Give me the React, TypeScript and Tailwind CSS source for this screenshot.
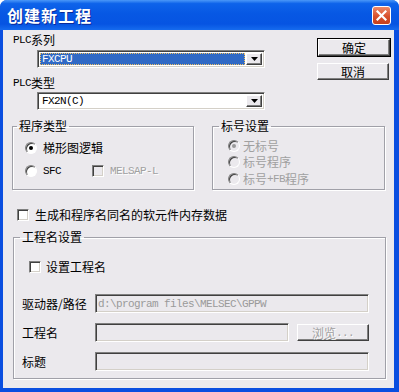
import React from "react";

const BG = "bg-[#ebe9ed]";
const sunken =
  "border border-t-[#808080] border-l-[#808080] border-b-white border-r-white shadow-[inset_1px_1px_0_#404040,inset_-1px_-1px_0_#d4d0c8]";
const raised =
  "border border-t-white border-l-white border-b-[#404040] border-r-[#404040] shadow-[inset_-1px_-1px_0_#808080]";

function A({ children, className = "" }: { children: React.ReactNode; className?: string }) {
  return (
    <span className={"font-['Liberation_Mono',monospace] text-[11px] tracking-[-0.6px] leading-[14px] " + className}>
      {children}
    </span>
  );
}

function Radio({ checked, disabled }: { checked?: boolean; disabled?: boolean }) {
  return (
    <span
      className={
        "flex w-[12px] h-[12px] shrink-0 rounded-full border border-t-[#808080] border-l-[#808080] border-b-white border-r-white shadow-[inset_1px_1px_0_#404040] items-center justify-center " +
        (disabled ? "bg-[#ebe9ed]" : "bg-white")
      }
    >
      {checked && <span className={"w-[4px] h-[4px] rounded-full " + (disabled ? "bg-[#9a9a9a]" : "bg-black")} />}
    </span>
  );
}

function Check({ disabled }: { disabled?: boolean }) {
  return <span className={"block w-[12px] h-[12px] shrink-0 " + sunken + " " + (disabled ? "bg-[#ebe9ed]" : "bg-white")} />;
}

function Arrow() {
  return (
    <svg width="7" height="4" viewBox="0 0 7 4">
      <path d="M0 0h7L3.5 4z" fill="#000" />
    </svg>
  );
}

function Combo({ children, selected }: { children: React.ReactNode; selected?: boolean }) {
  return (
    <div className={"ml-[24px] w-[228px] h-[18px] flex bg-white p-[2px] " + sunken}>
      <div className="flex-1 flex items-center pr-[1px]">
        {selected ? (
          <div className="w-full h-full bg-[#316ac5] border border-dotted border-[#f0c060] flex items-center pl-[1px] text-white">
            {children}
          </div>
        ) : (
          <div className="pl-[2px] flex items-center">{children}</div>
        )}
      </div>
      <div className={"w-[16px] h-full flex items-center justify-center " + BG + " " + raised}>
        <Arrow />
      </div>
    </div>
  );
}

function Button({ children, disabled }: { children: React.ReactNode; disabled?: boolean }) {
  return (
    <div
      className={
        "w-[72px] h-[17px] flex items-center justify-center " +
        BG +
        " " +
        raised +
        " " +
        (disabled ? "text-[#a0a0a0] [text-shadow:1px_1px_0_#ffffff]" : "text-black")
      }
    >
      {children}
    </div>
  );
}

function TextBox({ w, children }: { w: string; children?: React.ReactNode }) {
  return (
    <div className={w + " h-[19px] flex items-center pl-[2px] text-[#9a9a9a] " + BG + " " + sunken}>{children}</div>
  );
}

export default function App() {
  return (
    <div className="w-[399px] h-[392px] bg-white">
      <div className="w-[399px] h-[392px] rounded-t-[7px] bg-[#0a4ee0] flex flex-col overflow-hidden font-['Noto_Sans_CJK_SC',sans-serif]">
        <div className="h-[30px] shrink-0 flex items-center pl-[7px] pr-[8px] bg-[linear-gradient(to_bottom,#4b98f8_0%,#0e63ea_12%,#0758e4_45%,#0654e2_80%,#166bee_100%)]">
          <span className="text-white text-[16px] font-bold tracking-[1px] leading-[18px] [text-shadow:1px_1px_0_#0a2a9a]">
            创建新工程
          </span>
          <div className="ml-auto w-[19px] h-[19px] rounded-[3px] border border-white bg-[linear-gradient(to_bottom,#ee8a6a,#d8502c_55%,#c4401e)] flex items-center justify-center">
            <svg width="11" height="11" viewBox="0 0 11 11">
              <path d="M1.5 1.5l8 8M9.5 1.5l-8 8" stroke="#fff" strokeWidth="2.2" strokeLinecap="square" />
            </svg>
          </div>
        </div>

        <div className={"flex-1 ml-[3px] mr-[5px] mb-[4px] flex flex-col text-[12px] leading-[14px] text-black " + BG}>
          {/* top section */}
          <div className="flex pt-[3px]">
            <div className="ml-[10px] w-[252px] flex flex-col">
              <div className="h-[14px] flex items-center">
                <A>PLC</A>系列
              </div>
              <div className="mt-[3px]">
                <Combo selected>
                  <A>FXCPU</A>
                </Combo>
              </div>
              <div className="mt-[8px] h-[14px] flex items-center">
                <A>PLC</A>类型
              </div>
              <div className="mt-[2px]">
                <Combo>
                  <A>FX2N(C)</A>
                </Combo>
              </div>
            </div>
            <div className="ml-[52px] pt-[5px] flex flex-col gap-[6px]">
              <div className="border border-black">
                <Button>确定</Button>
              </div>
              <Button>取消</Button>
            </div>
          </div>

          {/* groups */}
          <div className="mt-[9px] ml-[9px] flex gap-[18px]">
            <fieldset className="w-[182px] h-[71px] border border-[#a0a0a8] shadow-[inset_1px_1px_0_#ffffff,1px_1px_0_#ffffff] p-0 m-0">
              <legend className="ml-[4px] px-[2px] h-[14px] leading-[14px]">程序类型</legend>
              <div className="pt-[8px] pl-[12px] flex flex-col">
                <div className="h-[14px] flex items-center gap-[6px]">
                  <Radio checked />
                  <span>梯形图逻辑</span>
                </div>
                <div className="mt-[9px] h-[14px] flex items-center">
                  <Radio />
                  <A className="ml-[6px]">SFC</A>
                  <span className="ml-[31px]">
                    <Check disabled />
                  </span>
                  <A className="ml-[6px] text-[#a0a0a0] [text-shadow:1px_1px_0_#ffffff]">MELSAP-L</A>
                </div>
              </div>
            </fieldset>
            <fieldset className="w-[173px] h-[71px] border border-[#a0a0a8] shadow-[inset_1px_1px_0_#ffffff,1px_1px_0_#ffffff] p-0 m-0">
              <legend className="ml-[6px] px-[2px] h-[14px] leading-[14px]">标号设置</legend>
              <div className="pt-[4px] pl-[15px] flex flex-col text-[#a0a0a0]">
                <div className="h-[17px] flex items-center gap-[3px]">
                  <Radio checked disabled />
                  <span>无标号</span>
                </div>
                <div className="h-[16px] flex items-center gap-[3px]">
                  <Radio disabled />
                  <span>标号程序</span>
                </div>
                <div className="h-[17px] flex items-center gap-[3px]">
                  <Radio disabled />
                  <span className="flex items-center h-[14px]">
                    标号<A>+FB</A>程序
                  </span>
                </div>
              </div>
            </fieldset>
          </div>

          {/* checkbox */}
          <div className="mt-[18px] ml-[14px] h-[14px] flex items-center gap-[6px]">
            <Check />
            <span>生成和程序名同名的软元件内存数据</span>
          </div>

          {/* project name group */}
          <fieldset className="mt-[8px] ml-[10px] w-[373px] h-[149px] border border-[#a0a0a8] shadow-[inset_1px_1px_0_#ffffff,1px_1px_0_#ffffff] p-0 m-0">
            <legend className="ml-[6px] px-[2px] h-[14px] leading-[14px]">工程名设置</legend>
            <div className="pt-[16px] pl-[15px] h-[14px] box-content flex items-center gap-[5px]">
              <Check />
              <span>设置工程名</span>
            </div>
            <div className="mt-[20px] pl-[8px] flex flex-col gap-[10px]">
              <div className="h-[19px] flex items-center">
                <span className="w-[73px]">驱动器/路径</span>
                <TextBox w="w-[274px]">
                  <A>d:\program files\MELSEC\GPPW</A>
                </TextBox>
              </div>
              <div className="h-[19px] flex items-center">
                <span className="w-[73px]">工程名</span>
                <TextBox w="w-[194px]" />
                <div className="ml-[8px]">
                  <Button disabled>
                    浏览<A>...</A>
                  </Button>
                </div>
              </div>
              <div className="h-[19px] flex items-center">
                <span className="w-[73px]">标题</span>
                <TextBox w="w-[274px]" />
              </div>
            </div>
          </fieldset>
        </div>
      </div>
    </div>
  );
}
